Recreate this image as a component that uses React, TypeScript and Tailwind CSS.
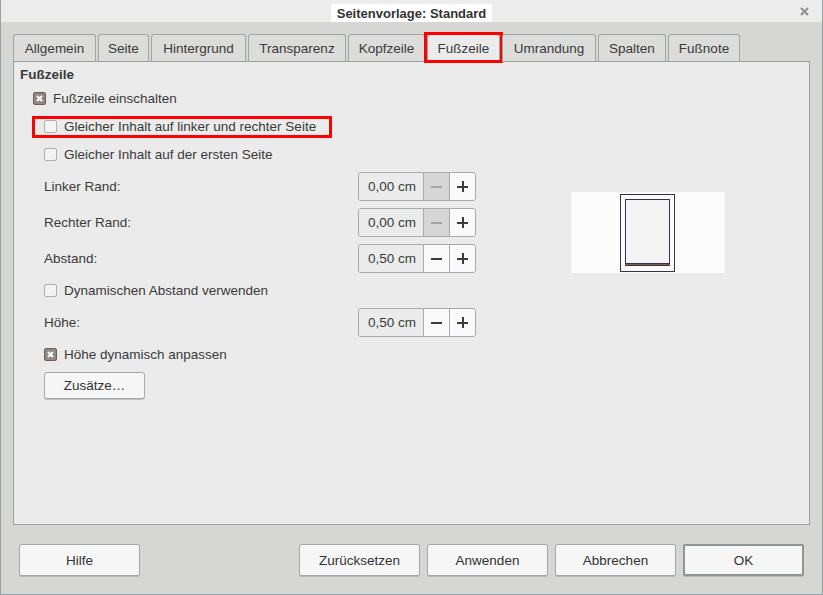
import type { ReactNode } from "react";

const tabs = [
  { label: "Allgemein", width: "w-[83px]" },
  { label: "Seite", width: "w-[51px]" },
  { label: "Hintergrund", width: "w-[95px]" },
  { label: "Transparenz", width: "w-[98px]" },
  { label: "Kopfzeile", width: "w-[77px]" },
  { label: "Fußzeile", width: "w-[73px]", active: true },
  { label: "Umrandung", width: "w-[94px]" },
  { label: "Spalten", width: "w-[68px]" },
  { label: "Fußnote", width: "w-[72px]" },
];

function CheckBox({ checked }: { checked?: boolean }) {
  if (checked) {
    return (
      <svg width="13" height="13" viewBox="0 0 13 13" className="shrink-0">
        <rect x="0.5" y="0.5" width="12" height="12" rx="1.5" fill="#8d8b89" stroke="#7a5a4c" />
        <path d="M4 4 L9 9 M9 4 L4 9" stroke="#ffffff" strokeWidth="2" />
      </svg>
    );
  }
  return <span className="block h-[13px] w-[13px] shrink-0 rounded-[2px] border border-[#aeb1b1] bg-[#f3f3f3]" />;
}

function CheckRow({ checked, children }: { checked?: boolean; children: ReactNode }) {
  return (
    <div className="flex h-[28px] items-center gap-[7px]">
      <CheckBox checked={checked} />
      <span className="mt-[2px]">{children}</span>
    </div>
  );
}

function Spin({ label, value, minusOff }: { label: string; value: string; minusOff?: boolean }) {
  return (
    <div className="flex h-[29px] items-center">
      <span className="mt-[2px] w-[314px]">{label}</span>
      <div className="flex h-[29px] w-[118px] overflow-hidden rounded-[3px] border border-[#a6aaaa]">
        <div className="flex flex-1 items-center bg-[#ebebeb] pt-[2px] pl-[9px] text-[#3a3a3a]">{value}</div>
        <div
          className={`flex w-[26px] items-center justify-center border-l border-[#a6aaaa] ${
            minusOff ? "bg-[#d6d6d6]" : "bg-[#fafafa]"
          }`}
        >
          <span className={`block h-[2px] w-[11px] ${minusOff ? "bg-[#a3a6a6]" : "bg-[#3a3a44]"}`} />
        </div>
        <div className="relative flex w-[26px] items-center justify-center border-l border-[#a6aaaa] bg-[#fafafa]">
          <span className="block h-[2px] w-[11px] bg-[#3a3a44]" />
          <span className="absolute block h-[11px] w-[2px] bg-[#3a3a44]" />
        </div>
      </div>
    </div>
  );
}

function Button({ children, primary }: { children: ReactNode; primary?: boolean }) {
  return (
    <button
      type="button"
      className={`h-[32px] w-[121px] rounded-[2px] bg-[#f6f6f6] pt-[2px] text-[#333] shadow-[0_1px_0_#b9bcbc] ${
        primary ? "border-2 border-[#8f9696]" : "border border-[#a3a8a8]"
      }`}
    >
      {children}
    </button>
  );
}

export default function App() {
  return (
    <div
      className="flex h-[595px] w-[823px] flex-col border-x border-b border-[#9aa0a0] bg-[#d6d6d4] text-[13.5px] text-[#3a3a3a]"
      style={{ fontFamily: '"Liberation Sans", Arial, sans-serif' }}
    >
      <div className="grid h-[22px] shrink-0 grid-cols-[1fr_auto_1fr] items-end bg-[#ececec]">
        <div />
        <div className="flex h-[18px] items-center bg-white px-[6px] pt-px text-[13px] font-bold text-[#333]">
          Seitenvorlage: Standard
        </div>
        <div className="flex h-full items-center justify-end pr-[13px]">
          <svg width="9" height="9" viewBox="0 0 9 9">
            <path d="M1 1 L8 8 M8 1 L1 8" stroke="#8e9090" strokeWidth="2" />
          </svg>
        </div>
      </div>

      <div className="flex flex-1 flex-col px-[12px] pt-[12px] pb-[18px]">
        <div className="relative z-10 -mb-px flex h-[28px] gap-[2px]">
          {tabs.map((tab) => (
            <div
              key={tab.label}
              className={`relative flex ${tab.width} items-center justify-center rounded-t-[3px] border pt-[2px] border-[#a0a5a5] ${
                tab.active ? "border-b-0 bg-[#ebebeb]" : "border-b-[#9aa0a0] bg-[#dcdcdb]"
              }`}
            >
              {tab.label}
              {tab.active ? (
                <span className="absolute -top-[3px] -right-[4px] -bottom-px -left-[4px] border-[3px] border-[#ff0000]" />
              ) : null}
            </div>
          ))}
        </div>

        <div className="h-[464px] border border-[#9aa0a0] bg-[#ebebeb] pt-[4px] pl-[6px]">
          <div className="h-[18px] leading-[18px] font-bold">Fußzeile</div>
          <div className="pl-[13px]">
            <CheckRow checked>Fußzeile einschalten</CheckRow>
          </div>
          <div className="pl-[24px]">
            <div className="relative">
              <span className="absolute top-[4px] -left-[12px] h-[22px] w-[300px] border-[3px] border-[#ff0000]" />
              <CheckRow>Gleicher Inhalt auf linker und rechter Seite</CheckRow>
            </div>
            <CheckRow>Gleicher Inhalt auf der ersten Seite</CheckRow>

            <div className="mt-[4px] flex">
              <div className="flex w-[432px] flex-col">
                <div className="flex flex-col gap-[7px]">
                  <Spin label="Linker Rand:" value="0,00 cm" minusOff />
                  <Spin label="Rechter Rand:" value="0,00 cm" minusOff />
                  <Spin label="Abstand:" value="0,50 cm" />
                </div>
                <div className="mt-[3px]">
                  <CheckRow>Dynamischen Abstand verwenden</CheckRow>
                </div>
                <div className="mt-[4px]">
                  <Spin label="Höhe:" value="0,50 cm" />
                </div>
                <div className="mt-[3px]">
                  <CheckRow checked>Höhe dynamisch anpassen</CheckRow>
                </div>
                <button
                  type="button"
                  className="mt-[4px] h-[27px] w-[101px] rounded-[3px] border border-[#a6aaaa] bg-[#f6f6f6] pt-[2px] text-[#333] shadow-[0_1px_0_#c0c3c3]"
                >
                  Zusätze…
                </button>
              </div>
              <div className="mt-[20px] ml-[95px] flex h-[81px] w-[154px] justify-center bg-[#fbfbfb] pt-[2px]">
                <svg width="56" height="78" viewBox="0 0 56 78">
                  <rect x="0.5" y="0.5" width="54" height="77" fill="#fbfbfb" stroke="#33364a" />
                  <rect x="5.5" y="5.5" width="44" height="64" fill="#f4f4f4" stroke="#33364a" />
                  <rect x="5" y="70" width="45" height="1" fill="#8b5a40" />
                  <rect x="5" y="71" width="45" height="1" fill="#33364a" />
                </svg>
              </div>
            </div>
          </div>
        </div>

        <div className="mt-[19px] flex items-center gap-[7px] px-[6px]">
          <Button>Hilfe</Button>
          <div className="flex-1" />
          <Button>Zurücksetzen</Button>
          <Button>Anwenden</Button>
          <Button>Abbrechen</Button>
          <Button primary>OK</Button>
        </div>
      </div>
    </div>
  );
}
